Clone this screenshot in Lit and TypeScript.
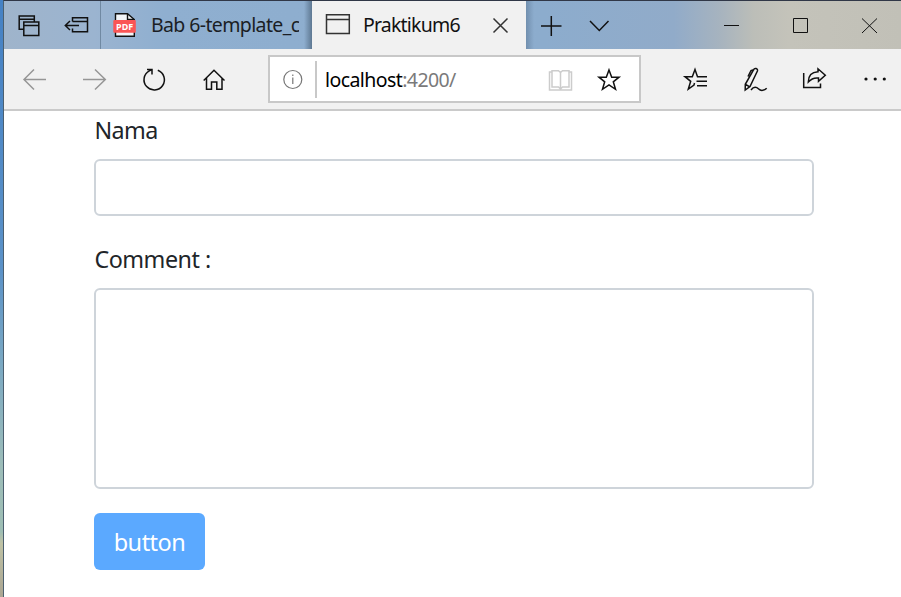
import { LitElement, html, svg, css } from "lit";
import { customElement } from "lit/decorators.js";

// Each icon owns a cell; its viewBox is expressed in window coordinates.
const icon = (x: number, y: number, w: number, h: number, body: unknown, cls = "") => html`
  <svg class="icon ${cls}" width=${w} height=${h} viewBox="${x} ${y} ${w} ${h}" aria-hidden="true">${body}</svg>`;

const I = {
  tabs: svg`<path d="M23.5 29.3H19.2V16H34.3V21.5M19.2 19.3H34.3M23.8 22H38.8V35.5H23.8ZM23.8 25.4H38.8"/>`,
  aside: svg`<path d="M72.5 21.5V17.8H87.5V31.7H72.5V28.5M72.5 21.5H87.5M65.5 25.5H79M70 21L65.3 25.5L70 30"/>`,
  pdf: svg`<path fill="#f3f5f8" stroke="#111" stroke-width="1.4" d="M115.5 13.7H127.5L134.3 19.5V36.3H115.5Z"/><path fill="none" stroke="#111" stroke-width="1.4" d="M127.5 13.7V19.5H134"/><rect x="113.3" y="20" width="22.5" height="12.7" rx="1" fill="#fa5555" stroke="none"/><text x="124.6" y="29.8" text-anchor="middle" textLength="17" lengthAdjust="spacingAndGlyphs" class="pdf">PDF</text>`,
  page: svg`<path d="M326.5 14.8H349.3V33.5H326.5ZM326.5 19.5H349.3"/>`,
  tabClose: svg`<path d="M493.5 18.5L507.5 32.5M507.5 18.5L493.5 32.5"/>`,
  plus: svg`<path d="M541 26H561.5M551.3 16V36"/>`,
  chevron: svg`<path d="M590 21L599.3 30.5L608.5 21"/>`,
  min: svg`<path d="M724 25.5H739"/>`,
  max: svg`<path d="M793.5 18.5H807.5V32.5H793.5Z"/>`,
  close: svg`<path d="M862 18.5L877 33M877 18.5L862 33"/>`,
  back: svg`<path d="M46 79.5H24M34 69.5L24 79.5L34 89.5"/>`,
  forward: svg`<path d="M83 79.5H105.5M95 69.5L105.3 79.5L95 89.5"/>`,
  reload: svg`<path d="M157.8 70.2A10.2 10.2 0 1 1 149.3 70.8L152 69.6M147 69.6H152V74.5"/>`,
  home: svg`<path d="M203.7 80.5L214 70.3L224.5 80.5M206.5 78V89.2H211.5V82H216.8V89.2H222V78"/>`,
  info: svg`<circle cx="292.8" cy="79.5" r="9"/><path d="M292.8 77.5V84M292.8 74.5V76"/>`,
  book: svg`<path d="M551.5 72H549.5V90H571.5V72H569.5M552 70.8H558.5L560.5 72.5L562.5 70.8H569V87H562.5L560.5 89L558.5 87H552ZM560.5 72.5V89"/>`,
  star: svg`<path d="M609 70L611.7 77.2H619L613.3 81.8L615.5 89.3L609 84.8L602.5 89.3L604.7 81.8L599 77.2H606.3Z"/>`,
  hub: svg`<path d="M707 76.7H697.5L695 69.5L692.3 76.7H685L690.7 81.3L688.3 89L694 85L694.5 83M696.5 81.3H707M697 85.7H707"/>`,
  pen: svg`<path d="M753.5 69.8C754.5 67.6 758.2 68.4 757.4 71L750 86.5L745.2 90L745.3 84.3ZM754.3 69.5L751 70.5L748 76.5M745.6 84.5L749.8 86.8M751 90C754 86.2 756.5 87 758.7 89C761 91.3 764.5 90.5 766.7 88.2"/>`,
  share: svg`<path d="M803.7 73V87.5H820.5V83.5M808.3 82C808.3 75.5 812 72 818 71.7V68.8L825.3 75.3L818.5 81.3V78C813.5 77.3 811 79 808.3 82Z"/>`,
  more: svg`<g fill="#111" stroke="none"><circle cx="866" cy="79" r="1.6"/><circle cx="875.2" cy="79" r="1.6"/><circle cx="884.3" cy="79" r="1.6"/></g>`,
};

@customElement("app-root")
export class AppRoot extends LitElement {
  static styles = css`
    :host {
      display: block;
      box-sizing: border-box;
      width: 901px;
      height: 597px;
      overflow: hidden;
      padding-left: 3px;
      background: linear-gradient(#4581c4 0%, #5b92c8 45%, #7ba9c3 61%, #9dbdb9 78%, #9ebeb4 89%, #bfc2a5 91%, #aaa592 100%);
      font-family: "Noto Sans", "Open Sans", sans-serif;
      color: #212529;
    }
    * { box-sizing: border-box; }
    .window {
      height: 597px;
      display: flex;
      flex-direction: column;
      background: #fff;
      border-left: 1px solid #4c6070;
      border-top: 1px solid #303747;
    }
    .titlebar {
      display: flex;
      flex: none;
      height: 48px;
      background: linear-gradient(90deg, #9fb4cb 0, #9bb4d0 90px, #8fafd0 160px, #8caccd 540px, #91abc9 670px, #a6b3bf 715px, #bcbeb8 750px, #c4c3ba 785px, #c1c0b7 100%);
    }
    .icon { display: block; flex: none; fill: none; stroke: #111; stroke-width: 1.5; }
    .thin { stroke-width: 1; }
    .dim { stroke: #969696; }
    .pale { stroke: #ccc; }
    .grey { stroke: #767676; stroke-width: 1.2; }
    .soft { stroke: #333; }
    .pdf { font: 700 8.5px "Noto Sans", sans-serif; fill: #fff; stroke: none; }
    .tab { display: flex; flex: none; white-space: nowrap; font-size: 19.5px; line-height: 48px; }
    .tab.idle {
      width: 212px;
      border-left: 1px solid #7089a2;
      background: linear-gradient(270deg, #5e7892 0, #7f9dbb00 8px);
      color: #1b1e24;
    }
    .tab.active { width: 214px; background: #f1f1f1; color: #111; }
    .tab-title { overflow: hidden; }
    .idle .tab-title { width: 148px; margin-right: 1px; letter-spacing: -0.62px; }
    .active .tab-title { width: 114px; letter-spacing: -0.8px; }
    .shade { flex: none; width: 8px; margin-right: -8px; background: linear-gradient(90deg, #607c9a99, #607c9a00); }
    .spacer { flex: 1; }
    .toolbar {
      display: flex;
      align-items: center;
      flex: none;
      height: 62px;
      background: #f1f1f1;
      border-bottom: 2px solid #cacaca;
    }
    .address {
      display: flex;
      align-items: center;
      width: 373px;
      height: 48px;
      margin: 0 32px 0 24px;
      border: 2px solid #c8c8c8;
      background: #fff;
    }
    .divider { width: 2px; height: 37px; background: #c8c8c8; }
    .url {
      flex: 1;
      padding: 2px 0 0 8px;
      font-size: 19.5px;
      line-height: 40px;
      letter-spacing: -0.58px;
      color: #000;
    }
    .port { color: #7a7a7a; }
    .form { display: flex; flex-direction: column; align-items: flex-start; padding: 1px 0 0 90px; }
    label { padding-left: 0.5px; font-size: 23.3px; line-height: 36px; }
    .field {
      display: block;
      width: 720px;
      margin: 11px 0 25px;
      border: 2px solid #ced4da;
      border-radius: 6px;
      background: #fff;
      outline: none;
      resize: none;
    }
    .line { height: 57px; }
    .area { height: 201px; margin-bottom: 24px; }
    .submit {
      width: 111px;
      height: 57px;
      padding: 1px 0 0;
      border: 0;
      border-radius: 6px;
      background: #5ba9ff;
      color: #fff;
      font: 23.5px "Noto Sans", sans-serif;
      letter-spacing: -0.5px;
    }
    .name { letter-spacing: -0.6px; }
    .comment { letter-spacing: -0.5px; }
  `;

  render() {
    return html`
      <div class="window">
        <div class="titlebar">
          ${icon(4, 1, 48, 48, I.tabs)}${icon(52, 1, 48, 48, I.aside)}
          <div class="tab idle">${icon(101, 1, 50, 48, I.pdf)}<span class="tab-title">Bab 6-template_c</span></div>
          <div class="tab active">${icon(312, 1, 51, 48, I.page, "soft")}<span class="tab-title">Praktikum6</span>${icon(477, 1, 49, 48, I.tabClose, "soft")}</div>
          <div class="shade"></div>
          ${icon(526, 1, 49, 48, I.plus)}${icon(575, 1, 48, 48, I.chevron)}
          <div class="spacer"></div>
          ${icon(697, 1, 69, 48, I.min, "thin")}${icon(766, 1, 69, 48, I.max, "thin")}${icon(835, 1, 66, 48, I.close, "thin")}
        </div>
        <div class="toolbar">
          ${icon(4, 49, 60, 60, I.back, "dim")}${icon(64, 49, 60, 60, I.forward, "dim")}${icon(124, 49, 60, 60, I.reload)}${icon(184, 49, 60, 60, I.home)}
          <div class="address">
            ${icon(270, 57, 45, 44, I.info, "grey")}
            <div class="divider"></div>
            <div class="url">localhost<span class="port">:4200/</span></div>
            ${icon(537, 57, 47, 44, I.book, "pale")}${icon(584, 57, 55, 44, I.star)}
          </div>
          ${icon(673, 49, 52, 60, I.hub)}${icon(725, 49, 60, 60, I.pen)}${icon(785, 49, 60, 60, I.share)}${icon(845, 49, 56, 60, I.more)}
        </div>
        <div class="form">
          <label class="name" for="name">Nama</label>
          <input class="field line" id="name" type="text" />
          <label class="comment" for="comment">Comment :</label>
          <textarea class="field area" id="comment"></textarea>
          <button class="submit" type="button">button</button>
        </div>
      </div>
    `;
  }
}
